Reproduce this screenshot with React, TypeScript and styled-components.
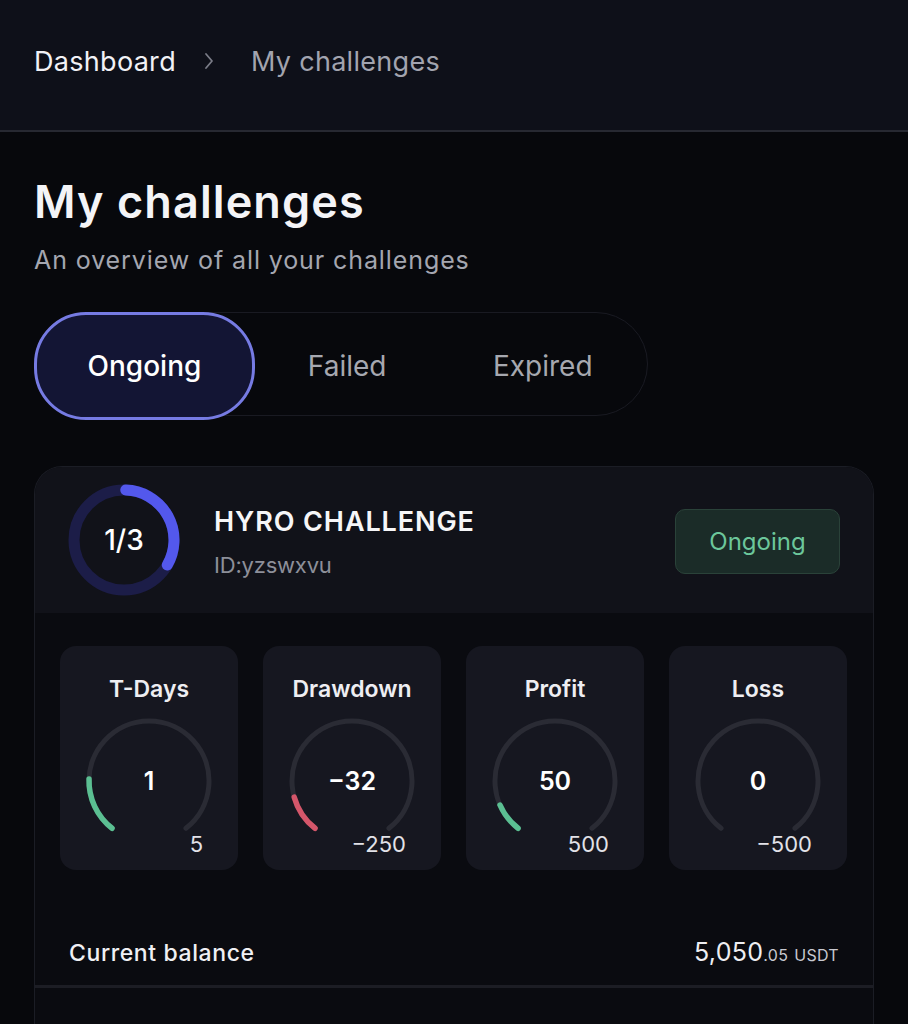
import React from "react";
import styled, { createGlobalStyle } from "styled-components";

const Global = createGlobalStyle`
  html, body { margin: 0; padding: 0; background: #07080c; }
  body { font-family: Inter, "Noto Sans", sans-serif; color: #f2f2f6; -webkit-font-smoothing: antialiased; }
  * { box-sizing: border-box; }
`;

const Page = styled.div`
  min-height: 1024px;
  background: #07080c;
`;

const Header = styled.header`
  height: 132px;
  background: #0e1019;
  border-bottom: 2px solid #272932;
  display: flex;
  align-items: center;
  padding: 0 34px 8px;
  font-size: 27px;
`;

const Crumb = styled.span<{ $current?: boolean }>`
  color: ${(p) => (p.$current ? "#a2a4af" : "#f1f1f5")};
  font-weight: 400;
  letter-spacing: 0.3px;
`;

const ChevronBox = styled.span`
  display: flex;
  margin: 0 35px 0 26px;
`;

const Main = styled.main`
  padding: 44px 34px 0;
`;

const Title = styled.h1`
  margin: 0;
  font-size: 45px;
  line-height: 52px;
  font-weight: 600;
  color: #f4f4f7;
  letter-spacing: 1.1px;
`;

const Subtitle = styled.p`
  margin: 16px 0 0;
  font-size: 25px;
  line-height: 32px;
  color: #a4a6b0;
  letter-spacing: 0.9px;
`;

const Tabs = styled.div`
  margin-top: 36px;
  display: inline-flex;
  height: 104px;
  border: 1.5px solid #191a22;
  border-radius: 52px;
`;

const Tab = styled.button<{ $active?: boolean }>`
  all: unset;
  display: flex;
  align-items: center;
  justify-content: center;
  height: 100%;
  padding: 0 51px;
  border-radius: 52px;
  border: 3px solid ${(p) => (p.$active ? "#767be3" : "transparent")};
  background: ${(p) => (p.$active ? "#131534" : "transparent")};
  color: ${(p) => (p.$active ? "#ffffff" : "#a6a8b0")};
  font-family: Inter, sans-serif;
  font-size: 28px;
  font-weight: ${(p) => (p.$active ? 500 : 400)};
  margin: -1.5px 0 0 -1.5px;
`;

const Card = styled.section`
  margin-top: 50px;
  border: 1.5px solid #1b1d25;
  border-bottom: none;
  border-radius: 28px 28px 0 0;
  background: #0a0b10;
  overflow: hidden;
`;

const CardHeader = styled.div`
  height: 146px;
  background: #111219;
  display: flex;
  align-items: center;
  padding: 0 33px 0 33px;
`;

const RingWrap = styled.div`
  position: relative;
  width: 112px;
  height: 112px;
  flex: none;
`;

const RingLabel = styled.div`
  position: absolute;
  inset: 0;
  display: flex;
  align-items: center;
  justify-content: center;
  font-size: 28px;
  font-weight: 500;
  color: #fff;
`;

const HeadText = styled.div`
  margin-left: 34px;
  flex: 1;
  display: flex;
  flex-direction: column;
  gap: 12px;
  padding-top: 4px;
`;

const ChallengeName = styled.div`
  font-size: 27px;
  line-height: 34px;
  font-weight: 600;
  color: #f6f6f8;
  letter-spacing: 0.9px;
`;

const ChallengeId = styled.div`
  font-size: 22px;
  line-height: 28px;
  color: #8d8f99;
  letter-spacing: -0.2px;
`;

const Badge = styled.div`
  width: 165px;
  height: 65px;
  border-radius: 10px;
  background: #1b2c28;
  border: 1.5px solid #2a4239;
  color: #6cc79b;
  font-size: 24px;
  display: flex;
  align-items: center;
  justify-content: center;
  margin-top: 2px;
`;

const StatsGrid = styled.div`
  display: grid;
  grid-template-columns: repeat(4, 178px);
  gap: 25px;
  padding: 33px 25px 0;
`;

const StatCard = styled.div`
  height: 224px;
  border-radius: 16px;
  background: #161720;
  display: flex;
  flex-direction: column;
  align-items: center;
  padding-top: 29px;
`;

const StatTitle = styled.div`
  font-size: 23px;
  line-height: 28px;
  font-weight: 600;
  color: #eeeef2;
`;

const GaugeWrap = styled.div`
  position: relative;
  width: 132px;
  height: 118px;
  margin-top: 12px;
`;

const GaugeValue = styled.div`
  position: absolute;
  left: 0;
  right: 0;
  top: 0;
  height: 132px;
  display: flex;
  align-items: center;
  justify-content: center;
  font-size: 25px;
  font-weight: 600;
  color: #fff;
`;

const MaxLabel = styled.div`
  align-self: stretch;
  text-align: right;
  padding-right: 35px;
  font-size: 22px;
  line-height: 28px;
  color: #e2e2e8;
  margin-top: -3px;
`;

const BalanceRow = styled.div`
  display: flex;
  align-items: baseline;
  justify-content: space-between;
  padding: 66px 34px 14px;
  border-bottom: 3px solid #1c1d24;
`;

const BalanceLabel = styled.div`
  font-size: 23px;
  line-height: 32px;
  font-weight: 500;
  color: #f0f0f4;
  letter-spacing: 0.6px;
`;

const BalanceValue = styled.div`
  font-size: 25px;
  line-height: 32px;
  color: #eeeef2;
  letter-spacing: 0.3px;
`;

const Small = styled.span<{ $gap?: boolean }>`
  font-size: 16px;
  color: #c8c9d0;
  margin-left: ${(p) => (p.$gap ? "6px" : "0")};
`;

const NextSection = styled.div`
  height: 120px;
`;

function polar(cx: number, cy: number, r: number, deg: number) {
  const a = ((deg - 90) * Math.PI) / 180;
  return [cx + r * Math.cos(a), cy + r * Math.sin(a)];
}

function arc(cx: number, cy: number, r: number, start: number, end: number) {
  const [x1, y1] = polar(cx, cy, r, start);
  const [x2, y2] = polar(cx, cy, r, end);
  const large = end - start > 180 ? 1 : 0;
  return `M ${x1} ${y1} A ${r} ${r} 0 ${large} 1 ${x2} ${y2}`;
}

const Ring = () => (
  <RingWrap>
    <svg width="112" height="112" viewBox="0 0 112 112">
      <circle cx="56" cy="56" r="50" fill="none" stroke="#1c1d48" strokeWidth="11" />
      <path d={arc(56, 56, 50, 2, 120)} fill="none" stroke="#5358ec" strokeWidth="11" strokeLinecap="round" />
    </svg>
    <RingLabel>1/3</RingLabel>
  </RingWrap>
);

const START = 218;
const SPAN = 284;

type Stat = { title: string; value: string; max: string; ratio: number; color: string };

const Gauge = ({ s }: { s: Stat }) => (
  <GaugeWrap>
    <svg width="132" height="118" viewBox="0 0 132 118">
      <path d={arc(66, 66, 60, START, START + SPAN)} fill="none" stroke="#2a2b34" strokeWidth="5" strokeLinecap="round" />
      {s.ratio > 0 && (
        <path d={arc(66, 66, 60, START, START + SPAN * s.ratio)} fill="none" stroke={s.color} strokeWidth="5.5" strokeLinecap="round" />
      )}
    </svg>
    <GaugeValue>{s.value}</GaugeValue>
  </GaugeWrap>
);

const stats: Stat[] = [
  { title: "T-Days", value: "1", max: "5", ratio: 0.19, color: "#5bbf92" },
  { title: "Drawdown", value: "−32", max: "−250", ratio: 0.128, color: "#d4566a" },
  { title: "Profit", value: "50", max: "500", ratio: 0.1, color: "#5bbf92" },
  { title: "Loss", value: "0", max: "−500", ratio: 0, color: "#5bbf92" },
];

const Chevron = () => (
  <ChevronBox>
    <svg width="14" height="22" viewBox="0 0 14 22">
      <path d="M4 4 L10 11 L4 18" fill="none" stroke="#7a7c87" strokeWidth="1.8" strokeLinecap="round" strokeLinejoin="round" />
    </svg>
  </ChevronBox>
);

export default function App() {
  return (
    <Page>
      <Global />
      <Header>
        <Crumb>Dashboard</Crumb>
        <Chevron />
        <Crumb $current>My challenges</Crumb>
      </Header>
      <Main>
        <Title>My challenges</Title>
        <Subtitle>An overview of all your challenges</Subtitle>
        <Tabs>
          <Tab $active>Ongoing</Tab>
          <Tab>Failed</Tab>
          <Tab>Expired</Tab>
        </Tabs>
        <Card>
          <CardHeader>
            <Ring />
            <HeadText>
              <ChallengeName>HYRO CHALLENGE</ChallengeName>
              <ChallengeId>ID:yzswxvu</ChallengeId>
            </HeadText>
            <Badge>Ongoing</Badge>
          </CardHeader>
          <StatsGrid>
            {stats.map((s) => (
              <StatCard key={s.title}>
                <StatTitle>{s.title}</StatTitle>
                <Gauge s={s} />
                <MaxLabel>{s.max}</MaxLabel>
              </StatCard>
            ))}
          </StatsGrid>
          <BalanceRow>
            <BalanceLabel>Current balance</BalanceLabel>
            <BalanceValue>
              5,050<Small>.05</Small>
              <Small $gap>USDT</Small>
            </BalanceValue>
          </BalanceRow>
          <NextSection />
        </Card>
      </Main>
    </Page>
  );
}
